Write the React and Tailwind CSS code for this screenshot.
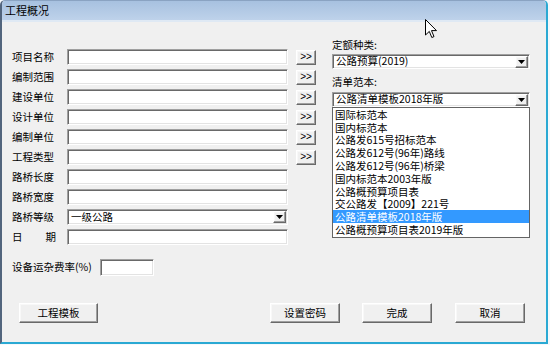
import React from "react";

const sunken =
  "bg-white border border-t-[#a0a0a0] border-l-[#a0a0a0] border-r-white border-b-white shadow-[inset_1px_1px_0_#696969,inset_-1px_-1px_0_#e3e3e3]";
const raised =
  "bg-[#f0f0f0] border border-t-white border-l-white border-r-[#696969] border-b-[#696969] shadow-[inset_-1px_-1px_0_#a0a0a0,inset_1px_1px_0_#f8f8f8]";

function Arrow() {
  return (
    <div className={`w-[13px] h-[12px] mr-[1px] ml-auto flex items-center justify-center ${raised}`}>
      <svg width="7" height="4" viewBox="0 0 7 4">
        <path d="M0 0h7L3.5 4z" fill="#000" />
      </svg>
    </div>
  );
}

function Row({ label, btn, children }) {
  return (
    <div className="flex h-[20px] items-center">
      <div className="w-[55px] shrink-0">{label}</div>
      {children || <div className={`w-[221px] h-[16px] ${sunken}`} />}
      {btn && (
        <div
          className={`ml-[8px] w-[20px] h-[15px] flex items-center justify-center text-[10px] leading-none font-['Liberation_Sans',sans-serif] ${raised}`}
        >
          &gt;&gt;
        </div>
      )}
    </div>
  );
}

function Btn({ children, w, ml }) {
  return (
    <div className={`${w} ${ml} h-[20px] flex items-center justify-center ${raised}`}>
      {children}
    </div>
  );
}

const items = [
  "国际标范本",
  "国内标范本",
  "公路发615号招标范本",
  "公路发612号(96年)路线",
  "公路发612号(96年)桥梁",
  "国内标范本2003年版",
  "公路概预算项目表",
  "交公路发【2009】221号",
  "公路清单模板2018年版",
  "公路概预算项目表2019年版",
];

export default function App() {
  return (
    <div className="relative w-[550px] h-[345px] bg-[#f6f8fb] text-[10.5px] leading-none text-black font-['Noto_Sans_CJK_SC','Liberation_Sans',sans-serif]">
      <div className="w-[548px] h-[344px] flex flex-col bg-[#f0f0f0] border-l-2 border-l-[#52657d] border-r-2 border-r-[#2aa9d3] border-b-2 border-b-[#2aa9d3] border-t border-t-[#8aa3c2] rounded-t-[5px] overflow-hidden">
        <div className="h-[19px] bg-linear-to-b from-[#a7c1e0] to-[#bed2ea] flex items-center pl-[3px] text-[11px]">
          工程概况
        </div>
        <div className="h-[2px] bg-[#dfe9f4]" />
        <div className="flex flex-col">
          <div className="flex">
            <div className="w-[330px] pl-[10px] pt-[25px] flex flex-col">
              <Row label="项目名称" btn />
              <Row label="编制范围" btn />
              <Row label="建设单位" btn />
              <Row label="设计单位" btn />
              <Row label="编制单位" btn />
              <Row label="工程类型" btn />
              <Row label="路桥长度" />
              <Row label="路桥宽度" />
              <Row label="路桥等级">
                <div className={`w-[221px] h-[16px] flex items-center ${sunken}`}>
                  <span className="pl-[3px]">一级公路</span>
                  <Arrow />
                </div>
              </Row>
              <Row
                label={
                  <div className="w-[44px] flex justify-between">
                    <span>日</span>
                    <span>期</span>
                  </div>
                }
              />
            </div>
            <div className="w-[198px] pt-[17px] flex flex-col">
              <div className="h-[12px] flex items-center">定额种类:</div>
              <div className={`mt-[3px] h-[15px] flex items-center ${sunken}`}>
                <span className="pl-[3px]">公路预算(2019)</span>
                <Arrow />
              </div>
              <div className="mt-[7px] h-[12px] flex items-center">清单范本:</div>
              <div className={`mt-[4px] h-[15px] flex items-center ${sunken}`}>
                <span className="pl-[3px]">公路清单模板2018年版</span>
                <Arrow />
              </div>
              <div className="h-[131px] bg-white border border-[#646464] flex flex-col">
                {items.map((t, i) => (
                  <div
                    key={t}
                    className={`h-[12.8px] flex items-center overflow-hidden pl-[2px] whitespace-nowrap ${
                      i === 8 ? "bg-[#3399ff] text-white" : ""
                    }`}
                  >
                    <span className="leading-[11px]">{t}</span>
                  </div>
                ))}
              </div>
            </div>
          </div>
          <div className="mt-[12px] pl-[10px] flex items-center h-[17px]">
            <div className="w-[88px]">设备运杂费率(%)</div>
            <div className={`w-[54px] h-[17px] ${sunken}`} />
          </div>
          <div className="mt-[27px] flex">
            <Btn w="w-[79px]" ml="ml-[17px]">工程模板</Btn>
            <Btn w="w-[70px]" ml="ml-[172px]">设置密码</Btn>
            <Btn w="w-[70px]" ml="ml-[22px]">完成</Btn>
            <Btn w="w-[70px]" ml="ml-[23px]">取消</Btn>
          </div>
        </div>
      </div>
      <svg
        className="absolute left-[425px] top-[19px]"
        width="12"
        height="20"
        viewBox="0 0 12 20"
      >
        <path
          d="M0.5 0.5 L0.5 16 L4.3 12.4 L6.8 18.5 L9 17.6 L6.5 11.6 L11.5 11.6 Z"
          fill="#fff"
          stroke="#000"
          strokeWidth="1"
          strokeLinejoin="miter"
        />
      </svg>
    </div>
  );
}
